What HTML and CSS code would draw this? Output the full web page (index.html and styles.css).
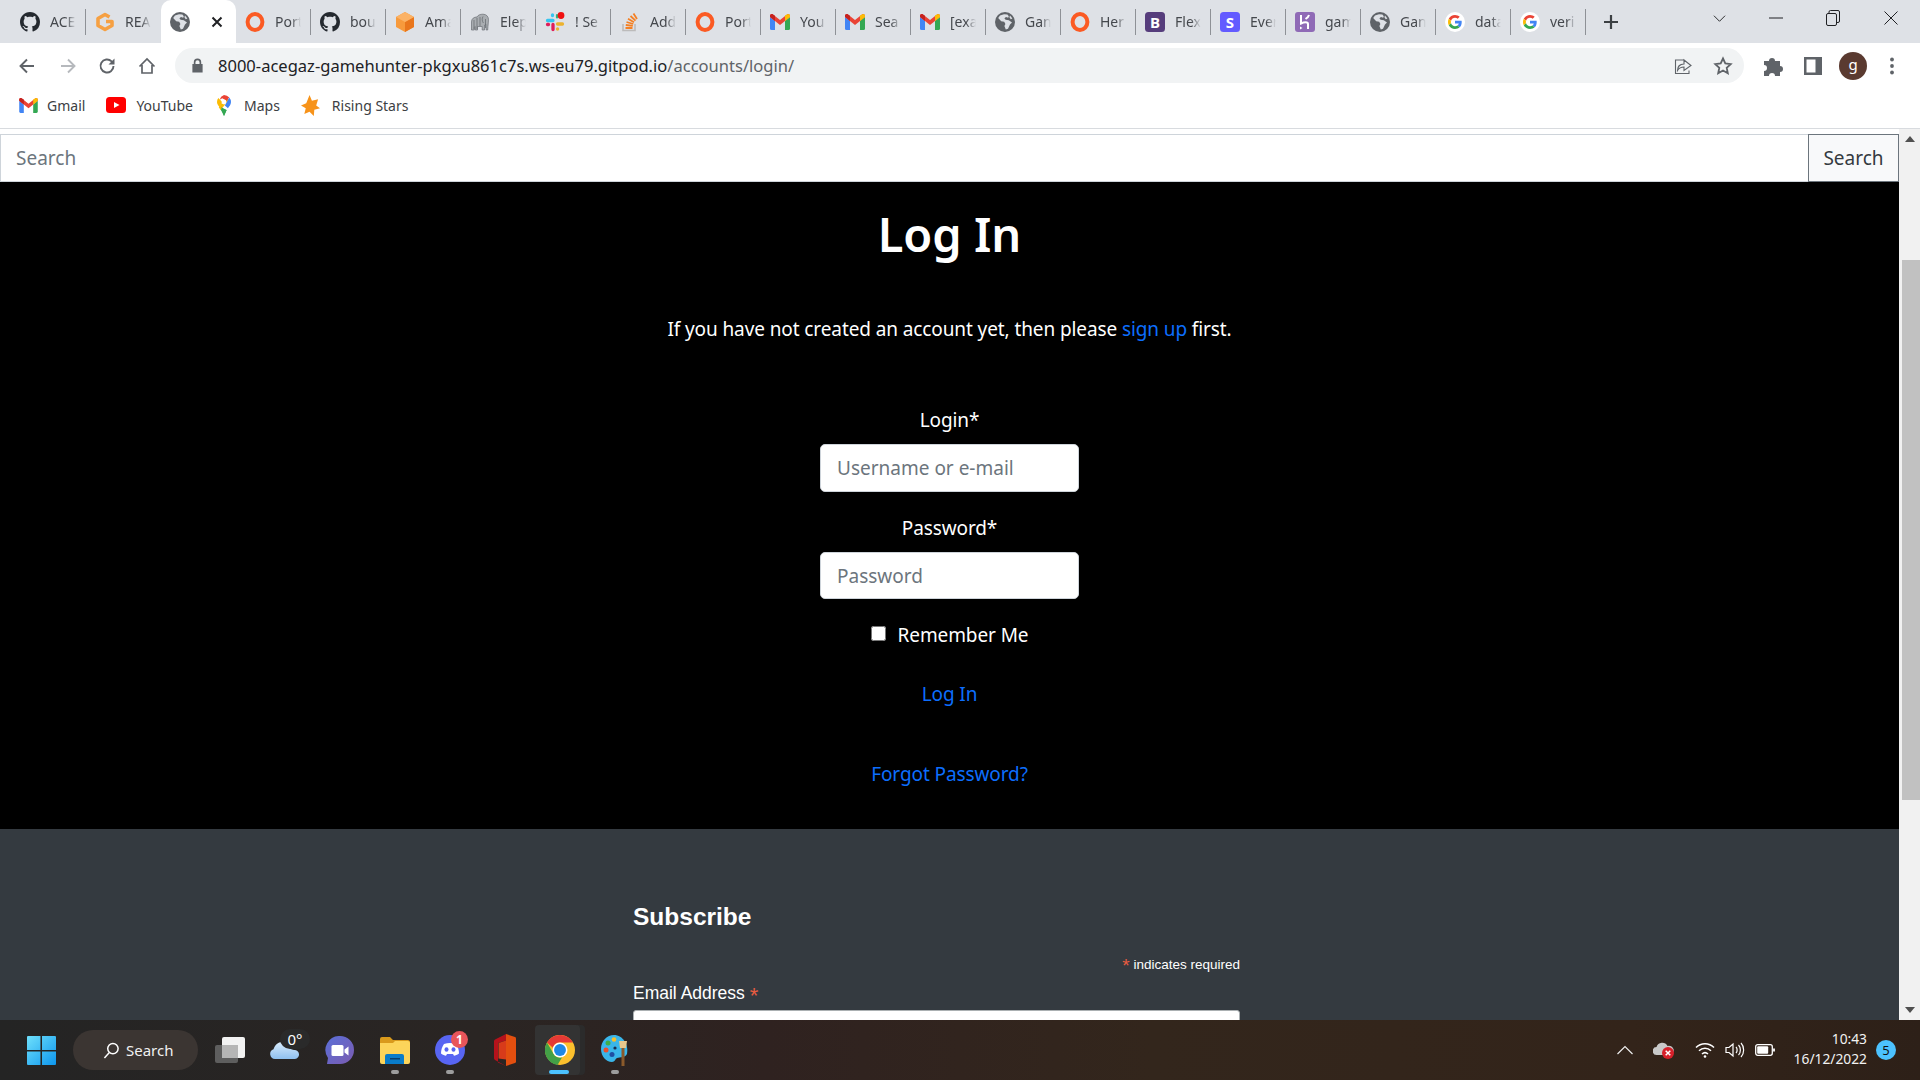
FILE: index.html
```html
<!DOCTYPE html>
<html lang="en">
<head>
<meta charset="utf-8">
<title>Log In</title>
<link rel="stylesheet" href="styles.css">
</head>
<body>
<svg class="defs" width="0" height="0" aria-hidden="true">
  <symbol id="gh" viewBox="0 0 16 16"><path fill="#24292f" d="M8 0C3.58 0 0 3.58 0 8c0 3.54 2.29 6.53 5.47 7.59.4.07.55-.17.55-.38 0-.19-.01-.82-.01-1.49-2.01.37-2.53-.49-2.69-.94-.09-.23-.48-.94-.82-1.13-.28-.15-.68-.52-.01-.53.63-.01 1.08.58 1.23.82.72 1.21 1.87.87 2.33.66.07-.52.28-.87.51-1.07-1.78-.2-3.64-.89-3.64-3.95 0-.87.31-1.59.82-2.15-.08-.2-.36-1.02.08-2.12 0 0 .67-.21 2.2.82.64-.18 1.32-.27 2-.27.68 0 1.36.09 2 .27 1.53-1.04 2.2-.82 2.2-.82.44 1.1.16 1.92.08 2.12.51.56.82 1.27.82 2.15 0 3.07-1.87 3.75-3.65 3.95.29.25.54.73.54 1.48 0 1.07-.01 1.93-.01 2.2 0 .21.15.46.55.38A8.013 8.013 0 0016 8c0-4.42-3.58-8-8-8z"/></symbol>
  <symbol id="rea" viewBox="0 0 20 20"><path fill="none" stroke="#f6a042" stroke-width="3.600" stroke-linejoin="round" d="M14.500 5L10 2.500 3 6.500v7L10 17.500l7-4V9.500h-6"/></symbol>
  <symbol id="globe" viewBox="0 0 20 20"><circle cx="10" cy="10" r="10" fill="#5f6368"/><path fill="#dee1e6" d="M9 2.200L5 3.600 3.200 6l3 3.200 3 .6 1.200 2.200-1 2 1.400 3.600 2.200-.8 2-4.400 2-2-3.200-2.200-3.200-.4-1.200-1.600 1.600-1.200 2.200.8.6-1.600-1.400-1.800zM15 3.400l2.400 3.200-1.600.6-1.400-2z"/></symbol>
  <symbol id="ring" viewBox="0 0 20 20"><ellipse cx="10" cy="10" rx="7.400" ry="7.900" fill="none" stroke="#fb5a23" stroke-width="4"/></symbol>
  <symbol id="box" viewBox="0 0 20 20"><path fill="#f79a3c" d="M10 0l9 5v10l-9 5-9-5V5z"/><path fill="#e9761c" d="M10 10l9-5v10l-9 5z"/><path fill="#fbb266" d="M10 0l9 5-9 5-9-5z"/></symbol>
  <symbol id="eleph" viewBox="0 0 20 20"><path fill="#a9adb1" stroke="#6a6f74" stroke-width=".7" d="M1.500 18V10C1.500 6.500 4 5 7 5c1-2 3-2.800 6-2.800 3.500 0 5.500 2.500 5.500 5.500 0 3-.5 4.500-.8 10.300h-1.500l-.4-6-1.300 1v5h-2.300v-3.500H7.500V18H5.300v-3.500l-1 .6V18z"/><path fill="none" stroke="#62676c" stroke-width=".7" d="M4 8v9M7 6v11M10 5v9M13 4.500c-1.200 2-1 4.500.4 6.500M15.500 7v9"/></symbol>
  <symbol id="slack" viewBox="0 0 20 20"><g stroke-width="3.300" stroke-linecap="round" fill="none"><path stroke="#36c5f0" d="M2.500 8.500h5.500M7.500 3v.5"/><path stroke="#2eb67d" d="M12 3v2.500" stroke-width="2.200"/><path stroke="#ecb22e" d="M12.500 12h5"/><path stroke="#e01e5a" d="M8 12.500v5M2.500 12.500h1"/><path stroke="#ecb22e" d="M12.500 17h.1"/></g><circle cx="16" cy="3.500" r="3.400" fill="#f01010"/></symbol>
  <symbol id="so" viewBox="0 0 20 20"><path fill="none" stroke="#bcbbbb" stroke-width="1.600" d="M3 12v6.500h12V12"/><path fill="none" stroke="#f48024" stroke-width="1.800" d="M5.500 16h7M5.800 13l7 .8M6.500 10l6.800 2M8 6.800l6 3.400M10.500 4l5 4.600M13.500 1.500l3.500 5.500"/></symbol>
  <symbol id="gm" viewBox="0 0 20 16"><path fill="#4285f4" d="M0 3v11.500A1.500 1.500 0 001.500 16H5V7z"/><path fill="#34a853" d="M15 7v9h3.500a1.500 1.500 0 001.500-1.500V3z"/><path fill="#ea4335" d="M0 1.700C0 .2 1.800-.6 3 .4L10 6l7-5.600c1.200-1 3-.2 3 1.300V3l-5 4-5 4-5-4-5-4z"/><path fill="#fbbc05" d="M15 1.500l2-1.100c1.200-1 3-.2 3 1.300V3l-5 4z"/><path fill="#c5221f" d="M0 1.700C0 .2 1.800-.6 3 .4l2 1.300V7L0 3z"/></symbol>
  <symbol id="bs" viewBox="0 0 20 20"><rect width="20" height="20" rx="3.500" fill="#563d7c"/><text x="10" y="15.500" text-anchor="middle" class="sym-b" fill="#fff">B</text></symbol>
  <symbol id="st" viewBox="0 0 20 20"><rect width="20" height="20" rx="3.500" fill="#635bff"/><text x="10" y="15.500" text-anchor="middle" class="sym-b" fill="#fff">S</text></symbol>
  <symbol id="hk" viewBox="0 0 20 20"><rect width="20" height="20" rx="3" fill="#8f6ab6"/><path fill="none" stroke="#fff" stroke-width="2" d="M6 3v8.500c3-1.500 7-2 7 .5v5M14 3c-.5 2-2 3-3.500 4"/><path fill="#fff" d="M5 14.500l2.500 1.500L5 17.500z"/></symbol>
  <symbol id="g" viewBox="0 0 48 48"><path fill="#EA4335" d="M24 9.500c3.540 0 6.710 1.220 9.210 3.600l6.850-6.850C35.900 2.380 30.470 0 24 0 14.620 0 6.510 5.380 2.560 13.220l7.980 6.190C12.430 13.720 17.740 9.500 24 9.500z"/><path fill="#4285F4" d="M46.980 24.550c0-1.570-.15-3.090-.38-4.550H24v9.020h12.940c-.58 2.960-2.260 5.480-4.780 7.180l7.730 6c4.510-4.180 7.090-10.360 7.090-17.650z"/><path fill="#FBBC05" d="M10.530 28.590c-.48-1.450-.76-2.990-.76-4.590s.27-3.140.76-4.590l-7.980-6.190C.92 16.460 0 20.120 0 24c0 3.880.92 7.540 2.560 10.780l7.970-6.190z"/><path fill="#34A853" d="M24 48c6.480 0 11.930-2.130 15.890-5.810l-7.730-6c-2.150 1.450-4.920 2.300-8.160 2.300-6.260 0-11.570-4.220-13.470-9.910l-7.980 6.190C6.510 42.620 14.620 48 24 48z"/></symbol>
  <symbol id="gwhite" viewBox="0 0 20 20"><circle cx="10" cy="10" r="10" fill="#fff"/><svg x="3" y="3" width="14" height="14" viewBox="0 0 48 48"><use href="#g"/></svg></symbol>
</svg>

<header class="tabstrip">
  <div class="tab"><svg class="fav"><use href="#gh"/></svg><span class="tab-title">ACE</span></div>
  <div class="tab tab-before-active"><svg class="fav"><use href="#rea"/></svg><span class="tab-title">REA</span></div>
  <div class="tab tab-active"><svg class="fav"><use href="#globe"/></svg><svg class="tab-close" viewBox="0 0 12 12"><path d="M1.500 1.500l9 9M10.500 1.500l-9 9"/></svg></div>
  <div class="tab"><svg class="fav"><use href="#ring"/></svg><span class="tab-title">Port</span></div>
  <div class="tab"><svg class="fav"><use href="#gh"/></svg><span class="tab-title">bou</span></div>
  <div class="tab"><svg class="fav"><use href="#box"/></svg><span class="tab-title">Ama</span></div>
  <div class="tab"><svg class="fav"><use href="#eleph"/></svg><span class="tab-title">Elep</span></div>
  <div class="tab"><svg class="fav"><use href="#slack"/></svg><span class="tab-title">! Se</span></div>
  <div class="tab"><svg class="fav"><use href="#so"/></svg><span class="tab-title">Add</span></div>
  <div class="tab"><svg class="fav"><use href="#ring"/></svg><span class="tab-title">Port</span></div>
  <div class="tab"><svg class="fav"><use href="#gm"/></svg><span class="tab-title">You</span></div>
  <div class="tab"><svg class="fav"><use href="#gm"/></svg><span class="tab-title">Sea</span></div>
  <div class="tab"><svg class="fav"><use href="#gm"/></svg><span class="tab-title">[exa</span></div>
  <div class="tab"><svg class="fav"><use href="#globe"/></svg><span class="tab-title">Gan</span></div>
  <div class="tab"><svg class="fav"><use href="#ring"/></svg><span class="tab-title">Her</span></div>
  <div class="tab"><svg class="fav"><use href="#bs"/></svg><span class="tab-title">Flex</span></div>
  <div class="tab"><svg class="fav"><use href="#st"/></svg><span class="tab-title">Ever</span></div>
  <div class="tab"><svg class="fav"><use href="#hk"/></svg><span class="tab-title">gam</span></div>
  <div class="tab"><svg class="fav"><use href="#globe"/></svg><span class="tab-title">Gan</span></div>
  <div class="tab"><svg class="fav"><use href="#gwhite"/></svg><span class="tab-title">data</span></div>
  <div class="tab"><svg class="fav"><use href="#gwhite"/></svg><span class="tab-title">veri</span></div>
  <svg class="newtab" viewBox="0 0 16 16"><path d="M8 1v14M1 8h14"/></svg>
  <div class="winctrls">
    <svg class="winbtn win-chevron" viewBox="0 0 14 14"><path d="M1 4l6 6 6-6"/></svg>
    <svg class="winbtn win-min" viewBox="0 0 14 14"><path d="M0 7h14"/></svg>
    <svg class="winbtn win-max" viewBox="0 0 14 16"><rect x=".5" y="3.500" width="10" height="12" rx="1.500"/><path d="M3 3.500V2A1.500 1.500 0 014.500.5H12A1.500 1.500 0 0113.500 2v9a1.500 1.500 0 01-1.500 1.500h-1.500"/></svg>
    <svg class="winbtn win-close" viewBox="0 0 14 14"><path d="M.5.500l13 13M13.500.500l-13 13"/></svg>
  </div>
</header>

<nav class="toolbar">
  <svg class="tool" viewBox="0 0 20 20"><path class="ico-line" d="M17 10H4M10 3.500L3.500 10l6.500 6.500"/></svg>
  <svg class="tool tool-fwd" viewBox="0 0 20 20"><path class="ico-line ico-dim" d="M3 10h13M10 3.500l6.500 6.500-6.500 6.500"/></svg>
  <svg class="tool" viewBox="0 0 20 20"><path class="ico-line" d="M16.500 10a6.500 6.500 0 11-1.900-4.600L16.500 7"/><path class="ico-fill" d="M17.500 2.500V8.500h-6z"/></svg>
  <svg class="tool" viewBox="0 0 20 20"><path class="ico-line ico-thin" d="M2.500 10.500L10 3l7.500 7.500M5 9v8h10V9"/></svg>
  <div class="omnibox">
    <svg class="lock" viewBox="0 0 14 16"><path class="ico-fill" d="M3 6.500V4.500a4 4 0 018 0v2h1.500v9h-11v-9zm1.800 0h4.400V4.500a2.200 2.200 0 00-4.400 0z"/></svg>
    <div class="url">8000-acegaz-gamehunter-pkgxu861c7s.ws-eu79.gitpod.io<span class="url-path">/accounts/login/</span></div>
    <svg class="tool" viewBox="0 0 20 20"><path class="ico-line ico-hair" d="M10.500 4h-8v13.500h13.500v-3M11 8V4l7 5.500-7 5v-3.500c-3.500 0-5 1-6.500 3.500 0-4 2.500-6.500 6.500-6.500z"/></svg>
    <svg class="tool" viewBox="0 0 20 20"><path class="ico-line ico-star" d="M10 2.500l2.300 5 5.400.6-4 3.700 1.100 5.400L10 14.500l-4.800 2.700 1.100-5.400-4-3.700 5.400-.6z"/></svg>
  </div>
  <svg class="tool tool-first" viewBox="0 0 20 20"><path class="ico-puzzle" d="M1 5h5a3 3 0 016 0h5v5a3 3 0 010 6v4h-5a3 3 0 00-6 0H1v-5a3 3 0 000-6z"/></svg>
  <svg class="tool" viewBox="0 0 20 20"><path class="ico-fill" fill-rule="evenodd" d="M1 1h18v18H1zm2.500 2.500v13h9v-13z"/></svg>
  <div class="avatar">g</div>
  <svg class="tool tool-dots" viewBox="0 0 20 20"><circle class="ico-fill" cx="10" cy="3.500" r="1.900"/><circle class="ico-fill" cx="10" cy="10" r="1.900"/><circle class="ico-fill" cx="10" cy="16.500" r="1.900"/></svg>
</nav>

<nav class="bookmarks">
  <a class="bm"><svg class="bm-ico bm-gmail" viewBox="0 0 20 16"><use href="#gm"/></svg>Gmail</a>
  <a class="bm"><svg class="bm-ico bm-yt" viewBox="0 0 20 16"><rect width="20" height="16" rx="3.500" fill="#f00"/><path fill="#fff" d="M8 5l5.500 3L8 11z"/></svg>YouTube</a>
  <a class="bm"><svg class="bm-ico bm-maps" viewBox="0 0 16 24"><path fill="#34a853" d="M4 16l4 8 3-7z"/><path fill="#fbbc04" d="M2 14c1 1.200 1.500 2 2 3L14 5.500 10 3z"/><path fill="#ea4335" d="M8 0a8 8 0 016 2.800L11 6.500 6 3.800 3 5.500A8 8 0 018 0z"/><path fill="#4285f4" d="M14 2.800A8 8 0 0116 8c0 3-2 5-3.500 7L9 12z"/><path fill="#fbbc04" d="M0 8a8 8 0 011.500-4.500L6 8l-3 6c-1.500-2-3-3.500-3-6z"/><circle cx="8" cy="8" r="2.800" fill="#fff"/><path fill="#34a853" d="M5 14l6 3-3 7c-.8-3-2-5.500-3-7z"/></svg>Maps</a>
  <a class="bm"><svg class="bm-ico bm-star" viewBox="0 0 20 22"><path fill="#f7931a" d="M9 0l2.500 6L18 4.500l-2 6.500 4 3-6 1.500L13.500 22 9 17.500 3.500 20 5 14 0 11l5.500-2.500z"/></svg>Rising Stars</a>
</nav>

<div class="viewport">
  <main class="page">
    <form class="searchbar">
      <input class="search-input" type="text" placeholder="Search">
      <button class="search-btn" type="button">Search</button>
    </form>
    <section class="login">
      <h1 class="login-title">Log In</h1>
      <p class="login-intro">If you have not created an account yet, then please <a class="link">sign up</a> first.</p>
      <div class="login-form">
        <label class="field-label">Login*</label>
        <input class="field-input" type="text" placeholder="Username or e-mail">
        <label class="field-label field-label-second">Password*</label>
        <input class="field-input field-input-short" type="password" placeholder="Password">
        <label class="remember"><input class="remember-box" type="checkbox">Remember Me</label>
        <a class="link submit">Log In</a>
        <a class="link forgot">Forgot Password?</a>
      </div>
    </section>
    <footer class="footer">
      <div class="subscribe">
        <h2 class="sub-title">Subscribe</h2>
        <div class="sub-required"><span class="req req-small">*</span> indicates required</div>
        <label class="sub-label">Email Address <span class="req">*</span></label>
        <input class="sub-input" type="email">
      </div>
    </footer>
  </main>
  <aside class="scrollbar">
    <div class="sb-arrow sb-up"></div>
    <div class="sb-track"><div class="sb-thumb"></div></div>
    <div class="sb-arrow sb-down"></div>
  </aside>
</div>

<footer class="taskbar">
  <svg class="tb-start" viewBox="0 0 28 28"><defs><linearGradient id="wg" x1="0" y1="0" x2="1" y2="1"><stop offset="0" stop-color="#6fe0fb"/><stop offset="1" stop-color="#0d96ee"/></linearGradient></defs><path fill="url(#wg)" d="M0 1a1 1 0 011-1h12v13.500H0zM14.500 0H27a1 1 0 011 1v12.500H14.500zM0 15h13v13H1a1 1 0 01-1-1zM14.500 15H28v12a1 1 0 01-1 1H14.500z"/></svg>
  <div class="tb-search"><svg class="tb-search-ico" viewBox="0 0 18 18"><circle cx="10.500" cy="7" r="5.500"/><path d="M6.500 11.500L1.500 17"/></svg>Search</div>
  <div class="tb-apps">
    <div class="tb-app"><svg class="tb-ico tb-taskview" viewBox="0 0 30 26"><rect x="0" y="8" width="23" height="18" rx="2" fill="#5e5e5e"/><rect x="7" y="0" width="23" height="21" rx="2" fill="#f2f2f2"/><rect x="7" y="8" width="16" height="13" fill="#b5b5b5"/></svg></div>
    <div class="tb-app"><svg class="tb-weather" viewBox="0 0 30 18"><defs><linearGradient id="cl" x1="0" y1="0" x2="0" y2="1"><stop offset="0" stop-color="#d9ecfc"/><stop offset="1" stop-color="#8fc0ef"/></linearGradient></defs><path fill="url(#cl)" d="M5 18a5 5 0 01-1.500-9.700C5 4 8 1 12 1c3 0 5 1.500 7 4 1 3 2 3.500 5 4a4.500 4.500 0 011 9z"/></svg><span class="tb-temp">0°</span></div>
    <div class="tb-app"><svg class="tb-ico tb-meet" viewBox="0 0 29 29"><defs><linearGradient id="mt" x1="0" y1="0" x2="1" y2="1"><stop offset="0" stop-color="#5a6fd8"/><stop offset="1" stop-color="#7b5bb0"/></linearGradient></defs><path fill="url(#mt)" d="M15 0a14 14 0 010 28H2l1-6A14 14 0 0115 0z"/><rect x="6.500" y="9" width="12" height="11" rx="1.500" fill="#fff"/><path fill="#fff" d="M19.500 13.500l4-3v9l-4-3z"/></svg></div>
    <div class="tb-app"><svg class="tb-ico tb-folder" viewBox="0 0 30 27"><path fill="#d99a1c" d="M0 2a2 2 0 012-2h8l3 3h15a2 2 0 012 2v4H0z"/><path fill="#fcd45a" d="M0 6h13l2-2h13a2 2 0 012 2v19a2 2 0 01-2 2H2a2 2 0 01-2-2z"/><path fill="#0a7cc9" d="M5 19a2 2 0 012-2h15a2 2 0 012 2v8H5z"/><rect x="10" y="21" width="10" height="1.500" fill="#063f70"/></svg><span class="tb-dot"></span></div>
    <div class="tb-app"><svg class="tb-ico tb-discord" viewBox="0 0 30 30"><circle cx="15" cy="15" r="15" fill="#5865f2"/><path fill="#fff" d="M9 9c4-1.500 8-1.500 12 0 2 3 3 6 3 9.500-2 1.500-3.500 2-5 2.300L18 19h-6l-1 1.800c-1.500-.3-3-.8-5-2.300C6 15 7 12 9 9z"/><ellipse cx="11.500" cy="14.500" rx="2" ry="2.200" fill="#5865f2"/><ellipse cx="18.500" cy="14.500" rx="2" ry="2.200" fill="#5865f2"/></svg><span class="tb-badge">1</span><span class="tb-dot"></span></div>
    <div class="tb-app"><svg class="tb-ico tb-office" viewBox="0 0 22 32"><path fill="#e34f0f" d="M12 0l9 3c.7.3 1 .8 1 1.500v23c0 .7-.3 1.200-1 1.500l-9 3z"/><path fill="#b5121b" d="M12 0L1 5.500C.4 5.800 0 6.500 0 7v17c0 1 .4 1.500 1 2l11 6-8-3.500V9l8-2.500z"/><path fill="#d83b1a" d="M4.500 9L12 6.500v19l-7.500-1z"/></svg></div>
    <div class="tb-app tb-active"><svg class="tb-ico tb-chrome" viewBox="0 0 48 48"><circle cx="24" cy="24" r="24" fill="#fbc02d"/><path fill="#e53935" d="M24 0a24 24 0 0120.800 12H24a12 12 0 00-11.400 8.200L3.200 12A24 24 0 0124 0z"/><path fill="#43a047" d="M3.200 12l10.400 18a12 12 0 0013.800 5.500L20 48A24 24 0 013.200 12z"/><circle cx="24" cy="24" r="12" fill="#fff"/><circle cx="24" cy="24" r="9.500" fill="#1e88e5"/></svg><span class="tb-bar"></span></div>
    <div class="tb-app"><svg class="tb-ico tb-paint" viewBox="0 0 28 31"><path fill="#3ab6ea" d="M13 0C6 0 0 6 0 14c0 7 5 13 11 13 3 0 3-3 5-4 3-1 8 0 10-4 2-9-4-19-13-19z"/><circle cx="7" cy="8" r="2.500" fill="#3fae49"/><circle cx="13" cy="4.500" r="2.300" fill="#f6c02c"/><circle cx="5" cy="15" r="2.500" fill="#e8502e"/><circle cx="11" cy="19.500" r="2.500" fill="#1f4fa3"/><circle cx="14" cy="13" r="1.600" fill="#1c2f4f"/><path fill="#8b5a2b" d="M20.500 13h3v18h-3z"/><path fill="#e7c78c" d="M18 6h8l-1 7h-6z"/></svg><span class="tb-dot"></span></div>
  </div>
  <div class="tray">
    <svg class="tray-chevron" viewBox="0 0 16 10"><path d="M.500 9L8 1.500 15.500 9"/></svg>
    <svg class="tray-cloud" viewBox="0 0 22 20"><path fill="#c9c9c9" d="M4 15a4 4 0 01-.5-8 6 6 0 0111-1 4.500 4.500 0 013 9z"/><circle cx="15" cy="13" r="6" fill="#d6202a"/><path stroke="#fff" stroke-width="1.500" d="M12.700 10.700l4.600 4.600M17.300 10.700l-4.600 4.600"/></svg>
    <svg class="tray-wifi" viewBox="0 0 20 16"><path d="M1 5.500c5-5 13-5 18 0M4 8.800c3.400-3.400 8.600-3.400 12 0M7 12c1.700-1.600 4.300-1.600 6 0"/><circle cx="10" cy="14.500" r="1.300" fill="#fff" stroke="none"/></svg>
    <svg class="tray-sound" viewBox="0 0 20 16"><path d="M1 5.500v5h3l4 3.500V2L4 5.500zM11 5c1.500 1.500 1.500 4.500 0 6M13.500 3c2.500 2.500 2.500 7.500 0 10M16 1c3.500 3.500 3.500 10.500 0 14"/></svg>
    <svg class="tray-batt" viewBox="0 0 20 12"><rect x=".700" y=".700" width="16.600" height="10.600" rx="2"/><rect x="2.200" y="2.200" width="11" height="7.600" rx="1" fill="#fff" stroke="none"/><path d="M19 4.500v3" stroke-width="1.800"/></svg>
    <div class="clock"><div>10:43</div><div>16/12/2022</div></div>
    <div class="notif">5</div>
  </div>
</footer>
</body>
</html>
```

FILE: styles.css
```css
* { box-sizing: border-box; }
html, body { margin: 0; padding: 0; height: 100%; overflow: hidden; }
body { width: 1920px; height: 1080px; display: flex; flex-direction: column; font-family: "Noto Sans", "Open Sans", sans-serif; background: #fff; }
.defs { position: absolute; }
.sym-b { font: 700 15px "Open Sans", sans-serif; }

/* tab strip */
.tabstrip { flex: 0 0 43px; background: #dee1e6; display: flex; align-items: center; padding-left: 11px; }
.tab { flex: 0 0 75px; height: 43px; display: flex; align-items: center; padding-left: 9px; position: relative; }
.tab::after { content: ""; position: absolute; right: 0; top: 9px; width: 1px; height: 26px; background: #8e9196; }
.tab-before-active::after, .tab-active::after { display: none; }
.tab-active { background: #fff; border-radius: 10px 10px 0 0; padding-left: 9px; }
.fav { width: 20px; height: 20px; flex: none; }
.tab-title { margin-left: 10px; width: 26px; overflow: hidden; white-space: nowrap; font: 400 14px "Noto Sans", sans-serif; color: #45484d; -webkit-mask-image: linear-gradient(90deg, #000 62%, transparent); mask-image: linear-gradient(90deg, #000 62%, transparent); }
.tab-close { width: 12px; height: 12px; margin-left: 21px; fill: none; stroke: #202124; stroke-width: 2; }
.newtab { width: 16px; height: 16px; margin-left: 17px; fill: none; stroke: #3c4043; stroke-width: 2.200; }
.winctrls { margin-left: auto; display: flex; align-items: center; height: 36px; margin-bottom: 7px; padding-right: 22px; }
.winbtn { fill: none; stroke: #202124; stroke-width: 1; }
.win-chevron { width: 13px; height: 13px; }
.win-min { width: 14px; height: 14px; margin-left: 43px; }
.win-max { width: 14px; height: 16px; margin-left: 43px; }
.win-close { width: 14px; height: 14px; margin-left: 44px; }

/* toolbar */
.toolbar { flex: 0 0 44px; padding: 5px 0 4px 7px; display: flex; align-items: center; background: #fff; }
.tool { flex: 0 0 40px; width: 40px; height: 20px; }
.tool-fwd { margin-left: 1px; margin-right: -1px; }
.ico-line { fill: none; stroke: #5f6368; stroke-width: 1.900; }
.ico-dim { stroke: #b6b9bd; }
.ico-thin { stroke-width: 1.700; }
.ico-hair { stroke-width: 1.100; }
.ico-star { stroke-width: 1.800; }
.ico-fill { fill: #5f6368; }
.ico-puzzle { fill: #5f6368; }
.omnibox { width: 1569px; margin-left: 8px; height: 35px; border-radius: 18px; background: #f1f3f4; display: flex; align-items: center; padding-left: 16px; padding-right: 1px; }
.lock { width: 13px; height: 15px; flex: none; }
.url { flex: 1; margin-left: 14px; font: 400 16.550px "Noto Sans", sans-serif; color: #202124; white-space: nowrap; }
.url-path { color: #5f6368; }
.tool-first { margin-left: 9px; }
.avatar { flex: 0 0 28px; height: 28px; margin: 0 6px; border-radius: 50%; background: #5a3a30; color: #fff; font: 400 15px "Noto Sans", sans-serif; display: flex; align-items: center; justify-content: center; padding-bottom: 3px; }
.tool-dots { margin-left: -1px; }

/* bookmarks */
.bookmarks { flex: 0 0 42px; display: flex; align-items: center; background: #fff; border-bottom: 1px solid #d8dbdf; padding: 0 0 5px 19px; font-size: 14px; color: #3c4043; }
.bm { display: flex; align-items: center; white-space: nowrap; }
.bm-ico { flex: none; }
.bm-gmail { width: 19px; height: 15px; margin-right: 9px; }
.bm-yt { width: 20px; height: 16px; margin: 0 10px 0 21px; }
.bm-maps { width: 14px; height: 21px; margin: 0 13px 0 24px; }
.bm-star { width: 19px; height: 21px; margin: 0 12px 0 21px; }

/* viewport */
.viewport { flex: 0 0 891px; display: flex; overflow: hidden; }
.page { flex: 0 0 1899px; display: flex; flex-direction: column; padding-top: 5px; overflow: hidden; }
.searchbar { flex: 0 0 48px; display: flex; }
.search-input { flex: 1; min-width: 0; border: 1px solid #ced4da; border-right: 0; padding: 0 15px; font: 400 19px "Noto Sans", sans-serif; color: #212529; outline: 0; }
.search-input::placeholder, .field-input::placeholder { color: #6c757d; opacity: 1; }
.search-btn { flex: 0 0 91px; border: 1px solid #6c757d; background: #f8f9fa; color: #343a40; font: 400 19px "Noto Sans", sans-serif; padding: 0; }

.login { flex: 0 0 647px; background: #000; color: #fff; display: flex; flex-direction: column; align-items: center; text-align: center; }
.login-title { margin: 17px 0 0; font: 600 47px/70px "Noto Sans", sans-serif; }
.login-intro { margin: 45px 0 0; font: 400 19px/30px "Noto Sans", sans-serif; letter-spacing: -.1px; }
.link { color: #0d6efd; text-decoration: none; }
.login-form { margin-top: 61px; width: 259px; display: flex; flex-direction: column; align-items: center; font-size: 19px; line-height: 30px; letter-spacing: -.1px; }
.field-label { display: block; }
.field-label-second { margin-top: 21px; }
.field-input { width: 259px; height: 48px; margin-top: 9px; border: 1px solid #ced4da; border-radius: 5px; padding: 0 16px; font: 400 19px "Noto Sans", sans-serif; background: #fff; outline: 0; }
.field-input-short { height: 47px; }
.remember { margin-top: 21px; display: flex; align-items: center; white-space: nowrap; }
.remember-box { width: 15px; height: 15px; margin: 0 12px 4px 0; }
.submit { margin-top: 29px; }
.forgot { margin-top: 50px; }

.footer { flex: 1; background: #343a40; color: #fff; padding: 74px 0 0 633px; font-family: "Liberation Sans", Arial, sans-serif; overflow: hidden; }
.subscribe { width: 607px; }
.sub-title { margin: 0; font: 700 24.500px/28px "Liberation Sans", Arial, sans-serif; }
.sub-required { height: 18px; margin-top: 25px; text-align: right; font-size: 13.500px; line-height: 18px; }
.req { color: #e85c41; font-size: 22px; line-height: 0; vertical-align: -4px; }
.req-small { font-size: 19px; vertical-align: -3px; }
.sub-label { display: block; margin-top: 8px; font-size: 17.500px; line-height: 22px; }
.sub-input { display: block; width: 607px; height: 44px; margin-top: 6px; border: 1px solid #abb0b2; border-radius: 3px; background: #fff; }

.scrollbar { flex: 0 0 21px; background: #f1f1f1; display: flex; flex-direction: column; }
.sb-arrow { flex: 0 0 20px; display: flex; align-items: center; justify-content: center; }
.sb-arrow::before { content: ""; border-left: 5px solid transparent; border-right: 5px solid transparent; }
.sb-up::before { border-bottom: 6px solid #505050; }
.sb-down::before { border-top: 6px solid #505050; }
.sb-track { flex: 1; padding: 111px 0 200px 3px; }
.sb-thumb { height: 540px; background: #c1c1c1; }

/* taskbar */
.taskbar { flex: 0 0 60px; display: flex; align-items: center; background: linear-gradient(90deg, #242424 0%, #2a2523 25%, #2f2220 40%, #33261c 60%, #33241a 85%, #2d2018 100%); color: #fff; padding-left: 27px; position: relative; }
.tb-start { width: 29px; height: 29px; flex: none; }
.tb-search { flex: 0 0 125px; height: 40px; margin-left: 17px; border-radius: 20px; background: #3b3532; display: flex; align-items: center; padding-left: 30px; font: 400 15px "Noto Sans", sans-serif; color: #f0f0f0; }
.tb-search-ico { width: 17px; height: 17px; margin-right: 6px; flex: none; fill: none; stroke: #fff; stroke-width: 1.600; }
.tb-apps { display: flex; margin-left: 4px; height: 60px; }
.tb-app { flex: 0 0 55px; height: 60px; display: flex; align-items: center; justify-content: center; position: relative; }
.tb-ico { width: 30px; height: 30px; flex: none; }
.tb-taskview { width: 30px; height: 26px; }
.tb-weather { width: 30px; height: 18px; flex: none; }
.tb-temp { position: absolute; left: 23px; top: 9px; width: 30px; height: 20px; border-radius: 10px; background: #2a2a2a; font: 400 15px/20px "Noto Sans", sans-serif; text-align: center; }
.tb-meet { width: 29px; height: 29px; }
.tb-folder { width: 30px; height: 27px; }
.tb-discord { width: 30px; height: 30px; }
.tb-office { width: 22px; height: 32px; }
.tb-chrome { width: 30px; height: 30px; }
.tb-paint { width: 28px; height: 31px; }
.tb-badge { position: absolute; left: 29px; top: 11px; width: 17px; height: 17px; border-radius: 50%; background: #e8555a; font: 700 12px/17px "Noto Sans", sans-serif; text-align: center; }
.tb-dot { position: absolute; left: 24px; bottom: 6px; width: 8px; height: 4px; border-radius: 2px; background: #9d9d9d; }
.tb-active::before { content: ""; position: absolute; left: 3px; top: 5px; width: 45px; height: 50px; border-radius: 4px; background: #333; box-shadow: 5px 0 0 #2b2b2b; }
.tb-active .tb-ico { position: relative; }
.tb-bar { position: absolute; left: 17px; bottom: 6px; width: 20px; height: 4px; border-radius: 2px; background: #4cc2ff; }
.tray { margin-left: auto; display: flex; align-items: center; padding-right: 24px; }
.tray svg { flex: none; }
.tray-chevron { width: 16px; height: 10px; fill: none; stroke: #eee; stroke-width: 1.200; margin-right: 20px; }
.tray-cloud { width: 22px; height: 20px; margin-right: 20px; }
.tray-wifi { width: 20px; height: 16px; fill: none; stroke: #fff; stroke-width: 1.500; margin-right: 10px; }
.tray-sound { width: 20px; height: 16px; fill: none; stroke: #fff; stroke-width: 1.200; margin-right: 10px; }
.tray-batt { width: 20px; height: 12px; fill: none; stroke: #fff; stroke-width: 1.300; margin-right: 19px; }
.clock { text-align: right; font: 400 13.800px/20px "Noto Sans", sans-serif; color: #f2f2f2; padding-bottom: 2px; }
.notif { width: 20px; height: 20px; margin-left: 9px; border-radius: 50%; background: #4cc2ff; color: #111; font: 400 13px/20px "Noto Sans", sans-serif; text-align: center; }
```
